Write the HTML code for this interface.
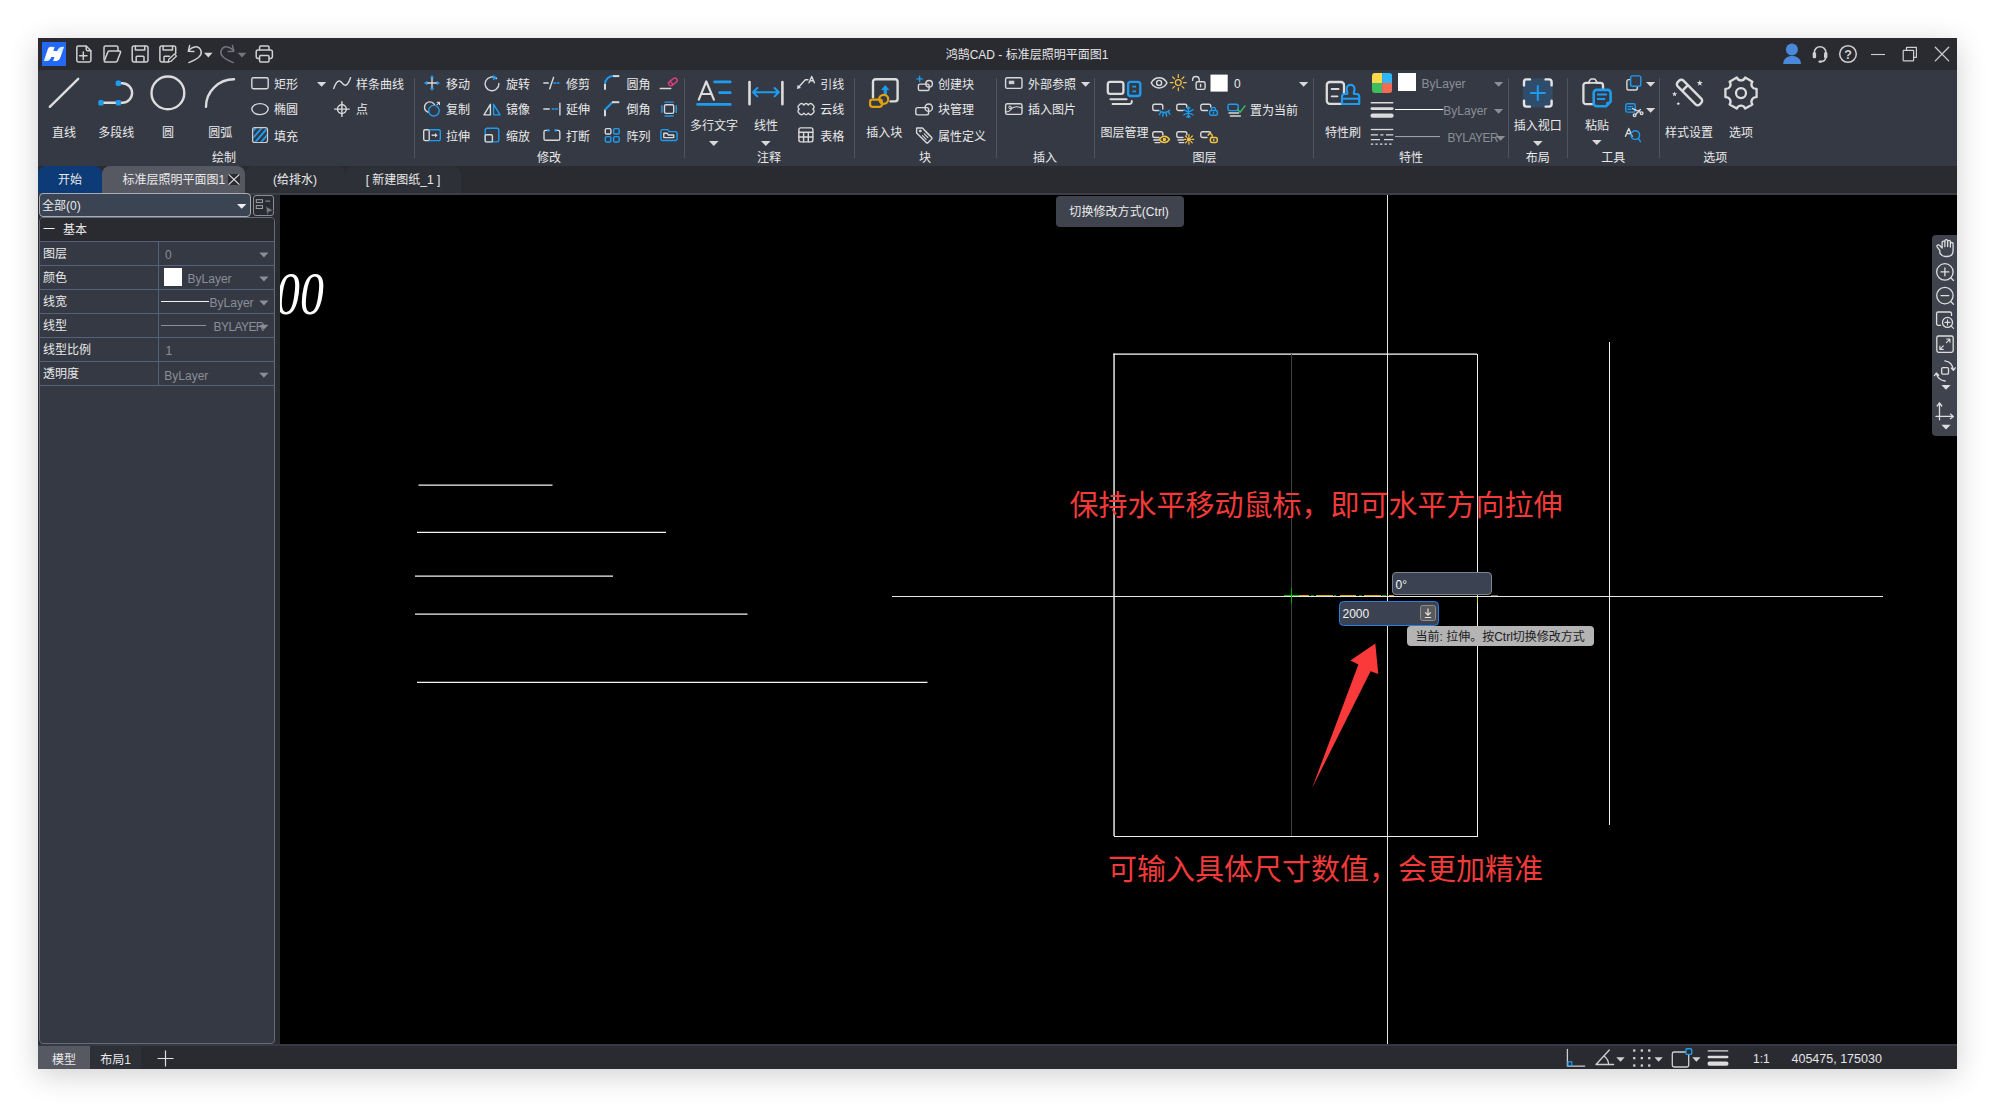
<!DOCTYPE html>
<html lang="zh-CN">
<head>
<meta charset="utf-8">
<title>鸿鹄CAD - 标准层照明平面图1</title>
<style>
html,body{margin:0;padding:0}
body{width:1995px;height:1107px;overflow:hidden;position:relative;background:#fff;
 font-family:"Liberation Sans","Noto Sans CJK SC",sans-serif;font-size:12px;color:#e6e6e6}
.a{position:absolute}
.t{position:absolute;white-space:nowrap;font-size:12px;line-height:16px;height:16px;color:#e9e9e9}
.c{text-align:center}
.g{color:#8b8e96}
svg{position:absolute;overflow:visible}
.sep{position:absolute;width:1px;top:78px;height:80px;background:#50545e}
.s{fill:none;stroke:#d9d9d9;stroke-width:1.4;stroke-linecap:round;stroke-linejoin:round}
.b{fill:none;stroke:#1e9cf0;stroke-width:1.4;stroke-linecap:round;stroke-linejoin:round}
.fw{fill:#d9d9d9}
.fb{fill:#1e9cf0}
.arr{position:absolute;width:0;height:0;border-left:4.5px solid transparent;border-right:4.5px solid transparent;border-top:5px solid #d9d9d9}
</style>
</head>
<body>
<!-- window frame -->
<div class="a" id="win" style="left:38px;top:38px;width:1919px;height:1031px;background:#2a2b31;box-shadow:0 6px 28px rgba(0,0,0,.19)"></div>
<!-- ribbon bg -->
<div class="a" id="ribbon" style="left:38px;top:70px;width:1919px;height:95.500px;background:#353944;border-radius:3px 0 0 0"></div>
<!-- canvas -->
<div class="a" id="canvas" style="left:280px;top:195px;width:1677px;height:849px;background:#000"></div>
<div class="a" style="left:38px;top:193px;width:1919px;height:2px;background:#3d3f47"></div>
<div class="a" style="left:38px;top:1044px;width:1919px;height:2px;background:#353944"></div>

<!-- ===== title bar ===== -->
<div class="a" style="left:42px;top:42px;width:24px;height:24px;background:#2468f8;overflow:hidden">
 <svg style="left:0;top:0" width="24" height="24" viewBox="0 0 24 24">
  <defs><linearGradient id="lg1" x1="0" y1="1" x2="1" y2="0"><stop offset="0" stop-color="#c4ebfc"/><stop offset=".28" stop-color="#fff"/><stop offset=".62" stop-color="#fff"/><stop offset=".85" stop-color="#c9ecfb"/><stop offset="1" stop-color="#e2f7fd"/></linearGradient></defs>
  <path d="M8.600,4.800 L12.700,5 L11.300,8.900 L15.200,8.900 C16,6.500 17.400,5 19.200,4.900 L22.100,4.800 L18.600,14.800 C17.800,17.400 16.500,18.800 14.500,18.900 L11.100,19 L12.500,14.900 L9.300,14.900 C8.500,17.300 7,18.800 5.300,18.900 L1.800,19 L5.700,7.600 C6.200,6 7,4.800 8.600,4.800 Z" fill="url(#lg1)"/>
 </svg>
</div>
<svg style="left:0;top:0" width="1995" height="72" viewBox="0 0 1995 72">
 <g fill="none" stroke="#cfcfcf" stroke-width="1.5" stroke-linecap="round" stroke-linejoin="round">
  <!-- new -->
  <path d="M78.4,46 h7.8 l4.7,4.7 v9.6 a1.6,1.6 0 0 1 -1.6,1.6 h-10.9 a1.6,1.6 0 0 1 -1.6,-1.6 v-12.7 a1.6,1.6 0 0 1 1.6,-1.6 z"/>
  <path d="M86.2,46.3 v3 a1.4,1.4 0 0 0 1.4,1.4 h3"/>
  <path d="M79.6,55.8 h7.4 M83.3,52.1 v7.4"/>
  <!-- open -->
  <path d="M104,59.5 v-11.9 a1.6,1.6 0 0 1 1.6,-1.6 h10.8 a1.6,1.6 0 0 1 1.6,1.6 v3.4"/>
  <path d="M105.6,61.9 h10.2 a1.6,1.6 0 0 0 1.5,-1 l3.2,-8.4 a1,1 0 0 0 -1,-1.4 h-10.2 a1.6,1.6 0 0 0 -1.5,1 l-3.5,9 a.6,.6 0 0 0 .6,.8 z"/>
  <!-- save -->
  <rect x="132.2" y="46" width="15.8" height="15.9" rx="1.8"/>
  <path d="M135.4,46.3 v3.6 h9.4 v-3.6"/>
  <path d="M136.2,61.6 v-4.6 a.8,.8 0 0 1 .8,-.8 h6.2 a.8,.8 0 0 1 .8,.8 v4.6"/>
  <!-- save as -->
  <path d="M168.5,61.9 h-6.8 a1.8,1.8 0 0 1 -1.8,-1.8 v-12.3 a1.8,1.8 0 0 1 1.8,-1.8 h12.2 a1.8,1.8 0 0 1 1.8,1.8 v5.6"/>
  <path d="M163.1,46.3 v3.6 h9.4 v-3.6"/>
  <path d="M164,61.6 v-4.6 a.8,.8 0 0 1 .8,-.8 h4.6"/>
  <path d="M168.2,61.9 l.6,-2.6 l5.7,-5.3 l2,2.1 l-5.7,5.3 z" stroke-width="1.3"/>
  <!-- undo -->
  <path d="M189.6,45.6 l-1.3,5.6 l5.6,.3"/>
  <path d="M188.6,51.1 c2.4,-4.6 10.400,-6.6 12.5,0 c1.6,5.400 -6,9.200 -12.200,11.500"/>
  <!-- print -->
  <path d="M259.600,49.8 v-2.6 a1.200,1.200 0 0 1 1.200,-1.200 h7 a1.200,1.200 0 0 1 1.200,1.200 v2.600"/>
  <path d="M259.4,58.400 h-1.400 a1.800,1.800 0 0 1 -1.800,-1.800 v-4.800 a1.800,1.800 0 0 1 1.800,-1.800 h12.600 a1.800,1.800 0 0 1 1.800,1.800 v4.800 a1.800,1.800 0 0 1 -1.800,1.800 h-1.400"/>
  <rect x="259.600" y="55.400" width="9.400" height="6.500" rx="1"/>
 </g>
 <g fill="none" stroke="#74767d" stroke-width="1.500" stroke-linecap="round" stroke-linejoin="round">
  <!-- redo (disabled) -->
  <path d="M232.500,45.600 l1.300,5.600 l-5.600,.300"/>
  <path d="M233.500,51.100 c-2.400,-4.600 -10.400,-6.600 -12.500,0 c-1.600,5.400 6,9.200 12.200,11.500"/>
 </g>
 <path d="M204,52.700 h8.600 l-4.300,4.700 z" fill="#d6d6d6"/>
 <path d="M237.600,52.700 h8.800 l-4.400,4.700 z" fill="#74767d"/>
 <!-- right side -->
 <circle cx="1791.900" cy="49.600" r="6" fill="#4a88d9"/>
 <path d="M1783.200,63.900 c0,-10.400 17.800,-10.400 17.800,0 z" fill="#4a88d9"/>
 <g fill="none" stroke="#cfcfcf" stroke-width="1.500" stroke-linecap="round" stroke-linejoin="round">
  <path d="M1814.300,53.500 v-1 a5.800,5.800 0 0 1 11.600,0 v1"/>
  <path d="M1825.600,57.500 c0,3 -2,3.900 -4.600,4.100"/>
  <circle cx="1848" cy="54" r="8.300"/>
  <path d="M1871,54.500 h14" stroke-width="1.100" stroke-linecap="butt"/>
  <rect x="1903.200" y="50.400" width="10.400" height="10.400" rx=".6" stroke-width="1.200"/>
  <path d="M1906.500,50 v-2.600 h9.900 v9.900 h-2.400" stroke-width="1.200"/>
  <path d="M1935.300,47.300 l13.400,13.600 M1948.700,47.300 l-13.400,13.600" stroke-width="1.300"/>
 </g>
 <rect x="1812.700" y="52.200" width="3.400" height="6" rx="1.200" fill="#cfcfcf"/>
 <rect x="1824" y="52.200" width="3.400" height="6" rx="1.200" fill="#cfcfcf"/>
 <rect x="1818.500" y="60.400" width="3.600" height="2.400" rx="1.200" fill="#cfcfcf"/>
 <text x="1848" y="58.500" text-anchor="middle" font-family="Liberation Sans, sans-serif" font-weight="bold" font-size="12.500" fill="#cfcfcf">?</text>
</svg>
<div class="t c" style="left:900px;width:254px;top:47px;color:#e4e4e4">鸿鹄CAD - 标准层照明平面图1</div>

<!-- ===== ribbon ===== -->
<div class="sep" style="left:414px"></div>
<div class="sep" style="left:684px"></div>
<div class="sep" style="left:854px"></div>
<div class="sep" style="left:996px"></div>
<div class="sep" style="left:1094px"></div>
<div class="sep" style="left:1313px"></div>
<div class="sep" style="left:1508px"></div>
<div class="sep" style="left:1567px"></div>
<div class="sep" style="left:1659px"></div>
<div class="t c " style="left:14.0px;width:100px;top:125.0px;">直线</div>
<div class="t c " style="left:66.2px;width:100px;top:125.0px;">多段线</div>
<div class="t c " style="left:118.0px;width:100px;top:125.0px;">圆</div>
<div class="t c " style="left:170.3px;width:100px;top:125.0px;">圆弧</div>
<div class="t " style="left:274px;top:76.7px;">矩形</div>
<div class="t " style="left:274px;top:102.2px;">椭圆</div>
<div class="t " style="left:274px;top:128.9px;">填充</div>
<div class="t " style="left:356px;top:76.7px;">样条曲线</div>
<div class="t " style="left:356px;top:102.2px;">点</div>
<div class="t c " style="left:174.0px;width:100px;top:149.9px;">绘制</div>
<div class="t " style="left:446px;top:76.7px;">移动</div>
<div class="t " style="left:446px;top:102.2px;">复制</div>
<div class="t " style="left:446px;top:128.9px;">拉伸</div>
<div class="t " style="left:506px;top:76.7px;">旋转</div>
<div class="t " style="left:506px;top:102.2px;">镜像</div>
<div class="t " style="left:506px;top:128.9px;">缩放</div>
<div class="t " style="left:566px;top:76.7px;">修剪</div>
<div class="t " style="left:566px;top:102.2px;">延伸</div>
<div class="t " style="left:566px;top:128.9px;">打断</div>
<div class="t " style="left:626.5px;top:76.7px;">圆角</div>
<div class="t " style="left:626.5px;top:102.2px;">倒角</div>
<div class="t " style="left:626.5px;top:128.9px;">阵列</div>
<div class="t c " style="left:499.0px;width:100px;top:149.9px;">修改</div>
<div class="t c " style="left:664.0px;width:100px;top:117.5px;">多行文字</div>
<div class="t c " style="left:716.0px;width:100px;top:117.5px;">线性</div>
<div class="t " style="left:820.3px;top:76.7px;">引线</div>
<div class="t " style="left:820.3px;top:102.2px;">云线</div>
<div class="t " style="left:820.3px;top:128.9px;">表格</div>
<div class="t c " style="left:719.0px;width:100px;top:149.9px;">注释</div>
<div class="t c " style="left:834.2px;width:100px;top:125.4px;">插入块</div>
<div class="t " style="left:938px;top:76.7px;">创建块</div>
<div class="t " style="left:938px;top:102.2px;">块管理</div>
<div class="t " style="left:938px;top:128.9px;">属性定义</div>
<div class="t c " style="left:875.0px;width:100px;top:149.9px;">块</div>
<div class="t " style="left:1028px;top:76.7px;">外部参照</div>
<div class="t " style="left:1028px;top:102.2px;">插入图片</div>
<div class="t c " style="left:995.0px;width:100px;top:149.9px;">插入</div>
<div class="t c " style="left:1074.5px;width:100px;top:124.8px;">图层管理</div>
<div class="t " style="left:1234px;top:76.1px;">0</div>
<div class="t " style="left:1250px;top:102.8px;">置为当前</div>
<div class="t c " style="left:1154.4px;width:100px;top:149.9px;">图层</div>
<div class="t c " style="left:1292.9px;width:100px;top:124.8px;">特性刷</div>
<div class="t g" style="left:1421.6px;top:76.2px;">ByLayer</div>
<div class="t g" style="left:1443.3px;top:103.2px;">ByLayer</div>
<div class="t g" style="left:1447.4px;top:129.8px;letter-spacing:-.55px">BYLAYER</div>
<div class="t c " style="left:1361.0px;width:100px;top:149.9px;">特性</div>
<div class="t c " style="left:1487.8px;width:100px;top:117.6px;">插入视口</div>
<div class="t c " style="left:1487.8px;width:100px;top:149.9px;">布局</div>
<div class="t c " style="left:1547.0px;width:100px;top:118.0px;">粘贴</div>
<div class="t c " style="left:1563.2px;width:100px;top:149.9px;">工具</div>
<div class="t c " style="left:1639.0px;width:100px;top:125.1px;">样式设置</div>
<div class="t c " style="left:1691.0px;width:100px;top:125.1px;">选项</div>
<div class="t c " style="left:1665.2px;width:100px;top:149.9px;">选项</div>
<svg style="left:316.6px;top:81.7px" width="9.2" height="4.8" viewBox="0 0 9.2 4.8"><path d="M0,0 H9.2 L4.6,4.8 Z" fill="#d9d9d9"/></svg>
<svg style="left:709.2px;top:140.7px" width="9.6" height="5" viewBox="0 0 9.6 5"><path d="M0,0 H9.6 L4.8,5 Z" fill="#d9d9d9"/></svg>
<svg style="left:761.2px;top:140.7px" width="9.6" height="5" viewBox="0 0 9.6 5"><path d="M0,0 H9.6 L4.8,5 Z" fill="#d9d9d9"/></svg>
<svg style="left:1080.7px;top:81.6px" width="9.2" height="4.8" viewBox="0 0 9.2 4.8"><path d="M0,0 H9.2 L4.6,4.8 Z" fill="#d9d9d9"/></svg>
<svg style="left:1299.4px;top:81.7px" width="9.2" height="4.8" viewBox="0 0 9.2 4.8"><path d="M0,0 H9.2 L4.6,4.8 Z" fill="#d9d9d9"/></svg>
<svg style="left:1494.4px;top:81.8px" width="9.2" height="4.8" viewBox="0 0 9.2 4.8"><path d="M0,0 H9.2 L4.6,4.8 Z" fill="#8b8e96"/></svg>
<svg style="left:1494.4px;top:109.0px" width="9.2" height="4.8" viewBox="0 0 9.2 4.8"><path d="M0,0 H9.2 L4.6,4.8 Z" fill="#8b8e96"/></svg>
<svg style="left:1495.7px;top:135.7px" width="9.2" height="4.8" viewBox="0 0 9.2 4.8"><path d="M0,0 H9.2 L4.6,4.8 Z" fill="#8b8e96"/></svg>
<svg style="left:1533.2px;top:140.6px" width="9.6" height="5" viewBox="0 0 9.6 5"><path d="M0,0 H9.6 L4.8,5 Z" fill="#d9d9d9"/></svg>
<svg style="left:1592.3px;top:140.4px" width="9.6" height="5" viewBox="0 0 9.6 5"><path d="M0,0 H9.6 L4.8,5 Z" fill="#d9d9d9"/></svg>
<svg style="left:1645.7px;top:81.7px" width="9.2" height="4.8" viewBox="0 0 9.2 4.8"><path d="M0,0 H9.2 L4.6,4.8 Z" fill="#d9d9d9"/></svg>
<svg style="left:1645.7px;top:107.6px" width="9.2" height="4.8" viewBox="0 0 9.2 4.8"><path d="M0,0 H9.2 L4.6,4.8 Z" fill="#d9d9d9"/></svg>
<svg style="left:0;top:0" width="1995" height="170" viewBox="0 0 1995 170">
<!-- === draw group big icons === -->
<g fill="none" stroke="#dcdcdc" stroke-width="2.4" stroke-linecap="round">
 <path d="M49.8,106.800 L78.200,78.800"/>
 <path d="M118.400,83.200 H122.300 A9.800,9.800 0 0 1 122.300,102.800 H101"/>
 <circle cx="167.900" cy="92.900" r="16.400"/>
 <path d="M206,106.800 A28,27.500 0 0 1 234,79.300"/>
</g>
<g fill="#1e9cf0">
 <rect x="115.700" y="80.500" width="5.400" height="5.400" rx="1.600"/>
 <rect x="115.700" y="100.100" width="5.400" height="5.400" rx="1.600"/>
 <rect x="98.300" y="100.100" width="5.400" height="5.400" rx="1.600"/>
</g>
<!-- small draw icons -->
<g class="s">
 <rect x="251.800" y="77.700" width="16.400" height="11" rx="1.600"/>
 <ellipse cx="260" cy="109.100" rx="8.200" ry="5.500"/>
 <path d="M333.700,88.600 C335.500,83.500 337.500,80.600 339.500,81 C342,81.500 343,85.500 345.500,85.300 C348,85 349.500,80.500 350.600,77.600"/>
 <circle cx="341.900" cy="109.100" r="4.400"/>
 <path d="M334.600,109.100 H349.200 M341.900,101.800 V116.400"/>
</g>
<!-- hatch -->
<clipPath id="hc"><rect x="253.300" y="128.300" width="13.500" height="13.500" rx="1"/></clipPath>
<g clip-path="url(#hc)" stroke="#1e9cf0" stroke-width="1.900">
 <path d="M249,136 L259,124 M250,141.600 L265,124 M254.200,143.400 L270,125 M259,144.600 L272,129.400 M264,145.400 L273,134.800"/>
</g>
<rect x="252.600" y="127.600" width="14.900" height="14.900" rx="2" fill="none" stroke="#cfcfcf" stroke-width="1.200"/>

<!-- === modify group === -->
<!-- move -->
<g class="s" stroke-width="1.500" stroke-linecap="butt"><path d="M426.600,83 H437.400 M432,77.600 V88.400"/></g>
<g class="fb">
 <path d="M432,75 l2.300,3.200 h-4.600 z M432,91 l2.300,-3.200 h-4.600 z M424,83 l3.200,-2.300 v4.600 z M440,83 l-3.200,-2.300 v4.600 z"/>
</g>
<!-- copy -->
<g class="s" stroke-width="1.300"><circle cx="429.800" cy="107.200" r="5.300"/><path d="M437.200,102.300 h2.300 v2.300 M439.500,102.300 l-2.400,2.400" stroke-width="1.100"/></g>
<circle class="b" cx="433.900" cy="110.700" r="5.300" style="fill:#353944"/>
<!-- stretch -->
<g class="s"><path d="M429.200,129.800 h-4 a1.500,1.500 0 0 0 -1.500,1.500 v7.800 a1.500,1.500 0 0 0 1.500,1.500 h4 z"/><path d="M431.600,135.200 h4" stroke-linecap="butt"/><path d="M435,133 l2.600,2.200 l-2.600,2.200 z" fill="#d9d9d9" stroke="none"/></g>
<path class="b" d="M429.200,129.800 h9.600 a1.500,1.500 0 0 1 1.500,1.500 v7.800 a1.500,1.500 0 0 1 -1.500,1.500 h-9.600"/>
<!-- rotate -->
<path class="s" d="M496.500,78.600 A6.900,6.900 0 1 0 498.900,83.500"/>
<path class="fb" d="M492.800,75 l4.600,2.500 l-4.300,2.900 z"/>
<!-- mirror -->
<path class="s" d="M490.400,104.300 V114.900 H484 z"/>
<path class="b" d="M493.600,104.300 V114.900 H500 z"/>
<!-- scale -->
<rect class="b" x="485.200" y="128.300" width="13.600" height="13.600" rx="2"/>
<rect x="485.200" y="134.800" width="7.200" height="7.100" rx="1.200" fill="#353944" stroke="#d9d9d9" stroke-width="1.400"/>
<!-- trim -->
<g class="s"><path d="M543.800,83 H548.300 M549.700,88.800 L553.600,77.300"/></g>
<path class="b" d="M553.800,83 H560.400" stroke-dasharray="1.800,1.600" stroke-linecap="butt"/>
<!-- extend -->
<g class="s"><path d="M543.800,109 H549.300 M559.900,103.200 V114.900"/></g>
<path class="b" d="M552.200,109 H558" stroke-dasharray="1.800,1.600" stroke-linecap="butt"/>
<!-- break -->
<path class="s" d="M548.200,130.400 H545.600 a1.600,1.600 0 0 0 -1.600,1.600 V138.700 a1.600,1.600 0 0 0 1.600,1.600 H558.200 a1.600,1.600 0 0 0 1.600,-1.600 V132 a1.600,1.600 0 0 0 -1.600,-1.600 H555.800"/>
<circle class="fb" cx="548.400" cy="130.400" r="1.300"/><circle class="fb" cx="555.600" cy="130.400" r="1.300"/>
<!-- fillet -->
<g fill="none" stroke-width="2" stroke-linecap="butt">
 <path d="M605,89.800 V84" stroke="#d9d9d9"/><path d="M605,84 A8,8 0 0 1 613,76.100" stroke="#1e9cf0"/><path d="M613,76.100 H619.300" stroke="#d9d9d9"/>
 <path d="M605,116.200 V109.500" stroke="#d9d9d9"/><path d="M605,109.700 L612.400,102.200" stroke="#1e9cf0"/><path d="M612,102.200 H619.300" stroke="#d9d9d9"/>
</g>
<!-- array -->
<rect class="s" x="605.300" y="128.600" width="5.600" height="5.400" rx="1.200"/>
<g class="b"><rect x="613.600" y="128.600" width="5.600" height="5.400" rx="1.200"/><rect x="605.300" y="136.600" width="5.600" height="5.400" rx="1.200"/><rect x="613.600" y="136.600" width="5.600" height="5.400" rx="1.200"/></g>
<!-- erase -->
<path class="s" d="M660.200,88.500 H670.800" stroke-width="1.200"/>
<g transform="translate(672.900,81.900) rotate(-38)" fill="none" stroke="#e0407c" stroke-width="1.400"><rect x="-4.800" y="-2.300" width="9.600" height="4.600" rx="2.300"/><path d="M-2.900,-2.300 a1.400,2.300 0 0 1 0,4.600"/></g>
<!-- offset -->
<rect class="s" x="664.500" y="104.700" width="9.200" height="8.700" rx="1.400" stroke-width="1.600"/>
<g class="b" stroke-width="1.600"><path d="M665,102.100 H673.200 M665,116 H673.200 M661.900,105.600 V112.400 M676.300,105.600 V112.400"/></g>
<!-- folder-ish -->
<path class="b" d="M662.500,129.600 h5.200 l1.600,2 h6.200 a1.600,1.600 0 0 1 1.600,1.600 v5.700 a1.600,1.600 0 0 1 -1.600,1.600 h-13 a1.600,1.600 0 0 1 -1.600,-1.600 v-7.700 a1.600,1.600 0 0 1 1.600,-1.600 z"/>
<path class="s" d="M663.800,137.600 v-4.400 h3.200 l1.300,1.800 h5.400 v2.600 z" stroke-width="1.200"/>

<!-- === annotate === -->
<g fill="none" stroke="#1e9cf0" stroke-width="2.800" stroke-linecap="round"><path d="M714.600,81.900 H730.200 M719.600,92.700 H730.200 M697.600,104.400 H730.200"/></g>
<path d="M698.800,99.700 L706.300,81.500 L713.900,99.700 M701.400,94 H711.300" fill="none" stroke="#dcdcdc" stroke-width="2.200" stroke-linecap="round" stroke-linejoin="round"/>
<g fill="none" stroke="#dcdcdc" stroke-width="2.600" stroke-linecap="round"><path d="M749.500,82 V104.300 M782.400,82 V104.300"/></g>
<g fill="none" stroke="#1e9cf0" stroke-width="2" stroke-linecap="round" stroke-linejoin="round"><path d="M753.400,92.200 H778.500 M757.300,88 L753.100,92.200 L757.300,96.400 M774.600,88 L778.800,92.200 L774.600,96.400"/></g>
<!-- leader -->
<g class="s" stroke-width="1.200"><path d="M798.800,87 L805.300,79.800 H807.900"/><path d="M809,82.800 L811.700,76.500 L814.400,82.800 M809.900,80.700 H813.500"/></g>
<path d="M796.900,89 l.8,-4.200 l3.300,3.100 z" fill="#d9d9d9"/>
<!-- cloud -->
<path class="s" stroke-width="1.300" d="M799.200,105 q2.300,-3 4.600,0 q2.250,-3 4.500,0 q2.300,-3 4.600,0 q2.400,2.050 0,4.100 q2.400,2.050 0,4.100 q-2.300,3 -4.600,0 q-2.250,3 -4.500,0 q-2.300,3 -4.600,0 q-2.400,-2.050 0,-4.100 q-2.400,-2.050 0,-4.100 z"/>
<!-- table -->
<g class="s" stroke-width="1.300"><rect x="798.900" y="127.900" width="14" height="14" rx="1.800"/><path d="M798.900,132.200 H812.900 M798.900,137 H812.900 M803.600,132.200 V141.900 M808.300,132.200 V141.900"/></g>

<!-- === block === -->
<path d="M873,97.300 V81.800 a2.600,2.600 0 0 1 2.600,-2.600 H895 a2.600,2.600 0 0 1 2.600,2.600 V98.800 a2.600,2.600 0 0 1 -2.600,2.600 H890.500" fill="none" stroke="#dcdcdc" stroke-width="2.400" stroke-linecap="round"/>
<path d="M885.300,85.600 L888.900,89.700 H886.500 V94.600 H884.100 V89.700 H881.700 Z" fill="#1e9cf0" stroke="#1e9cf0" stroke-width=".8" stroke-linejoin="round"/>
<g fill="none" stroke="#e0a010" stroke-width="2.200"><rect x="870.100" y="99.600" width="11.800" height="7.200" rx="2.200"/><circle cx="883.700" cy="99.300" r="4.500"/></g>
<!-- create block -->
<g class="s" stroke-width="1.200"><rect x="918.400" y="84.100" width="10.700" height="6.400" rx="1.600"/><circle cx="929.100" cy="83.800" r="3.300"/></g>
<path class="b" d="M917,78.900 H922.200 M919.600,76.300 V81.500" stroke-width="1.200"/>
<!-- block manage -->
<g class="s" stroke-width="1.200"><rect x="915.800" y="107.600" width="12.800" height="7.300" rx="1.800"/><circle cx="928.700" cy="107.700" r="3.700"/></g>
<!-- tag -->
<g class="s" stroke-width="1.200"><path d="M917.200,128 h5.200 l9.300,9.600 a1,1 0 0 1 0,1.400 l-3.800,3.700 a1,1 0 0 1 -1.400,0 l-9.600,-9.500 a1,1 0 0 1 -.3,-.7 v-3.900 a.6,.6 0 0 1 .6,-.6 z"/><path d="M922.500,135.700 l3.600,3.600 M924.300,133.900 l3.600,3.600 M926.100,132.100 l3.600,3.600" stroke-width="1.100"/><circle cx="920.200" cy="131" r="1" fill="#d9d9d9" stroke-width=".8"/></g>

<!-- === insert === -->
<g class="s" stroke-width="1.300"><rect x="1005.600" y="77.800" width="16.400" height="10.600" rx="1.600"/><rect x="1005.600" y="103.800" width="16.400" height="10.600" rx="1.600"/>
<circle cx="1010" cy="107.300" r="1.300" stroke-width="1"/><path d="M1006,112 c3,0 4,-1.600 6,-3.600 c2,-2 5,-2.400 9.600,-.4" stroke-width="1.100"/></g>
<rect x="1008.800" y="80.700" width="5.500" height="3.500" fill="#cfcfcf"/>

<!-- === layer === -->
<rect x="1107.800" y="81.800" width="15.600" height="12" rx="2.400" fill="none" stroke="#dcdcdc" stroke-width="2.300"/>
<g fill="none" stroke="#dcdcdc" stroke-width="2" stroke-linecap="round"><path d="M1110.400,99.300 H1126.600 M1112.600,104.100 H1129.400 a2.400,2.400 0 0 0 2.400,-2.400 v-.6"/></g>
<rect x="1128.100" y="81.800" width="12.200" height="14.200" rx="2.600" fill="none" stroke="#1e9cf0" stroke-width="2.300"/>
<path d="M1132.400,86.700 H1136 M1132.400,91.300 H1136" stroke="#1e9cf0" stroke-width="1.800" fill="none"/>
<!-- row1 -->
<g class="s" stroke-width="1.300"><path d="M1151.200,82.900 c3.800,-6.800 12,-6.800 15.800,0 c-3.800,6.800 -12,6.800 -15.800,0 z"/><circle cx="1159.100" cy="82.900" r="2.500"/>
<path d="M1199.200,81.300 v-1.500 a3.300,3.300 0 0 0 -6.600,0 v.6"/><rect x="1196.100" y="81.800" width="9" height="7.600" rx="1.600"/><path d="M1200.600,84.400 v2.400"/></g>
<g fill="none" stroke="#f5c542" stroke-width="1.200" stroke-linecap="round"><circle cx="1178.300" cy="82.600" r="2.900"/><path d="M1178.300,74.600 v2.800 M1178.300,87.800 v2.800 M1170.300,82.600 h2.800 M1183.500,82.600 h2.800 M1172.700,77 l1.900,1.900 M1182,86.300 l1.900,1.900 M1172.700,88.200 l1.900,-1.900 M1182,78.900 l1.900,-1.900"/></g>
<rect x="1210.500" y="74.600" width="17.200" height="17" fill="#fff"/>
<!-- row2 -->
<g class="s" stroke-width="1.500">
 <path d="M1159,110.500 h-4.400 a1.800,1.800 0 0 1 -1.800,-1.800 v-2.600 a1.800,1.800 0 0 1 1.800,-1.800 h6.400 a1.800,1.800 0 0 1 1.800,1.800 v3"/>
 <path d="M1183,110.500 h-4.400 a1.800,1.800 0 0 1 -1.800,-1.800 v-2.600 a1.800,1.800 0 0 1 1.800,-1.800 h6.400 a1.800,1.800 0 0 1 1.800,1.800 v1.400"/>
 <path d="M1207.400,110.500 h-4.800 a1.800,1.800 0 0 1 -1.800,-1.800 v-2.600 a1.800,1.800 0 0 1 1.800,-1.800 h6.400 a1.800,1.800 0 0 1 1.800,1.800 v1"/>
 <path d="M1229,113 H1238.600 M1230.400,116 H1240.400" stroke-width="1.300"/>
</g>
<g class="b" stroke-width="1.500">
 <path d="M1159.400,110.600 c2.600,2.600 7.400,2.600 10.200,-.4 M1160.800,112.300 l-1.500,2.300 M1163.300,113.200 l-.6,2.900 M1166,113.100 l.7,2.900 M1168.300,111.900 l1.600,2.300"/>
 <path d="M1188.400,107 v10.600 M1183.800,109.650 l9.200,5.300 M1193,109.650 l-9.200,5.300 M1186.800,107.600 l1.600,1.600 l1.600,-1.600 M1186.800,117 l1.600,-1.600 l1.600,1.600" stroke-width="1.300"/>
 <rect x="1209.600" y="110.500" width="7.800" height="4.700" rx="1.400"/><path d="M1211.500,110.300 v-.9 a2,2 0 0 1 4,0 v.9 M1213.500,112.300 v1.100" stroke-width="1.300"/>
 <rect x="1228" y="104.300" width="10.200" height="6.300" rx="1.800"/>
</g>
<path d="M1237.600,109.800 l2.600,2.400 l4.800,-6.400" fill="none" stroke="#35c46a" stroke-width="1.400" stroke-linecap="round" stroke-linejoin="round"/>
<!-- row3 -->
<g class="s" stroke-width="1.500">
 <path d="M1159,137.500 h-4.400 a1.800,1.800 0 0 1 -1.800,-1.800 v-2.200 a1.800,1.800 0 0 1 1.800,-1.800 h6.400 a1.800,1.800 0 0 1 1.800,1.800 v1.600 M1153.800,140 h5 M1155,142.600 h5" stroke-width="1.400"/>
 <path d="M1183,137.500 h-4.400 a1.800,1.800 0 0 1 -1.800,-1.800 v-2.200 a1.800,1.800 0 0 1 1.800,-1.800 h6.400 a1.800,1.800 0 0 1 1.800,1.800 v1.400 M1178,140 h5.400 M1179.200,142.600 h4.600" stroke-width="1.400"/>
 <path d="M1207,137.500 h-4.400 a1.800,1.800 0 0 1 -1.800,-1.800 v-2.200 a1.800,1.800 0 0 1 1.800,-1.800 h6.400 a1.800,1.800 0 0 1 1.600,1"/>
</g>
<g fill="none" stroke="#f5c542" stroke-width="1.500" stroke-linecap="round" stroke-linejoin="round">
 <path d="M1159.400,139.400 c2.600,-4.200 7.400,-4.200 10,0 c-2.600,4.200 -7.400,4.200 -10,0 z"/><circle cx="1164.400" cy="139.400" r="1" fill="#f5c542"/>
 <circle cx="1188.900" cy="139.400" r="1.300" fill="#f5c542"/><path d="M1188.900,134.600 v1.800 M1188.900,142.400 v1.800 M1184.100,139.400 h1.800 M1191.900,139.400 h1.800 M1185.500,136 l1.300,1.300 M1191,141.500 l1.300,1.300 M1185.500,142.800 l1.300,-1.300 M1191,137.300 l1.300,-1.300" stroke-width="1.200"/>
 <rect x="1210.400" y="137.400" width="6.800" height="5.100" rx="1.400"/><path d="M1212.200,137 v-1.400 a2.100,2.100 0 0 0 -4.100,-.4 M1213.800,139.400 v1.200" stroke-width="1.400"/>
</g>

<!-- === properties === -->
<rect x="1326.800" y="82" width="17.200" height="21.800" rx="3" fill="none" stroke="#dcdcdc" stroke-width="2.300"/>
<path d="M1331.600,89 H1338.600 M1331.600,96.300 H1337.500" stroke="#dcdcdc" stroke-width="1.800" stroke-linecap="round" fill="none"/>
<path d="M1342,104 v-7.400 a2.600,2.600 0 0 1 2.600,-2.600 h2.600 c.6,-1.800 -.5,-3 -.5,-5.200 a3.900,3.900 0 0 1 7.800,0 c0,2.200 -1.100,3.400 -.5,5.200 h2.600 a2.600,2.600 0 0 1 2.600,2.600 v7.400 z" fill="#353944" stroke="#1e9cf0" stroke-width="2.200" stroke-linejoin="round"/>
<path d="M1342.400,98.700 H1358.800" stroke="#1e9cf0" stroke-width="2" fill="none"/>
<clipPath id="cc"><rect x="1372" y="73" width="20.200" height="20" rx="3"/></clipPath>
<g clip-path="url(#cc)"><rect x="1372" y="73" width="10.100" height="10" fill="#ffd94a"/><rect x="1382.100" y="73" width="10.100" height="10" fill="#2eb6f5"/><rect x="1372" y="83" width="10.100" height="10" fill="#3dbd5d"/><rect x="1382.100" y="83" width="10.100" height="10" fill="#f26b55"/></g>
<rect x="1398" y="73" width="18" height="18" fill="#fff"/>
<g stroke="#dcdcdc" fill="none" stroke-linecap="round"><path d="M1371.300,102.800 H1392.800" stroke-width="1.400"/><path d="M1371.800,108.600 H1392.300" stroke-width="2.600"/><path d="M1372.600,115.700 H1391.500" stroke-width="4.300"/></g>
<path d="M1395,109.500 H1443.300" stroke="#fff" stroke-width="1" fill="none"/>
<g stroke="#dcdcdc" fill="none" stroke-width="1.300"><path d="M1370.800,129.500 H1393.300"/><path d="M1370.800,134.900 H1378 M1380.400,134.900 H1383.400 M1386,134.900 H1393.300"/><path d="M1370.800,139.700 H1380 M1384,139.700 H1393.300"/><path d="M1370.800,144.200 H1393.300" stroke-dasharray="2.400,2.200"/></g>
<path d="M1395,136.600 H1440" stroke="#a8abb2" stroke-width="1" fill="none"/>

<!-- === layout === -->
<rect x="1523" y="78.400" width="29.600" height="29.200" rx="4" fill="#2f4d6b"/>
<g fill="none" stroke="#e4e4e4" stroke-width="2.400" stroke-linecap="round"><path d="M1524,85.400 v-3.400 a2.600,2.600 0 0 1 2.600,-2.600 h3.400 M1545.600,79.400 h3.400 a2.600,2.600 0 0 1 2.600,2.600 v3.400 M1551.600,100.600 v3.400 a2.600,2.600 0 0 1 -2.600,2.600 h-3.400 M1530,106.600 h-3.400 a2.600,2.600 0 0 1 -2.600,-2.600 v-3.400"/></g>
<path d="M1530.800,93 H1544.800 M1537.800,86 V100" stroke="#1e9cf0" stroke-width="2" fill="none" stroke-linecap="round"/>

<!-- === tools === -->
<path d="M1589,82.800 h-3 a2.600,2.600 0 0 0 -2.600,2.600 v16.200 a2.600,2.600 0 0 0 2.600,2.600 h7 M1596.600,82.800 h3.800 a2.600,2.600 0 0 1 2.600,2.600 v3" fill="none" stroke="#dcdcdc" stroke-width="2.300" stroke-linecap="round"/>
<path d="M1588.600,82.800 l1.300,-2.800 a1.600,1.600 0 0 1 1.400,-1 h3 a1.600,1.600 0 0 1 1.400,1 l1.300,2.800 z" fill="none" stroke="#dcdcdc" stroke-width="1.700" stroke-linejoin="round"/>
<path d="M1596.700,89.900 h10.900 a3,3 0 0 1 3,3 v8.800 l-4.600,4.600 h-9.300 a3,3 0 0 1 -3,-3 v-10.400 a3,3 0 0 1 3,-3 z" fill="#353944" stroke="#1e9cf0" stroke-width="2.600" stroke-linejoin="round"/>
<path d="M1597.800,94.400 H1606.200 M1597.800,98.900 H1604.400" stroke="#1e9cf0" stroke-width="2" fill="none" stroke-linecap="round"/>
<path d="M1610.600,101.700 h-3 a1.600,1.600 0 0 0 -1.600,1.600 v3 z" fill="#1e9cf0"/>
<rect class="s" x="1626.900" y="79.600" width="10.400" height="10.400" rx="1.800" stroke-width="1.300"/>
<rect x="1630.600" y="75.900" width="10.200" height="10.300" rx="1.800" fill="#353944" stroke="#1e9cf0" stroke-width="1.400"/>
<rect class="b" x="1625.800" y="103.800" width="9.400" height="8.300" rx="1.600"/>
<path class="b" d="M1628,106.600 h4.600 M1628,109.300 h3" stroke-width="1.100"/>
<g class="s" stroke-width="1"><path d="M1632.600,108.600 l7.600,3.600 M1635.800,114.200 l4.600,-4.600"/><circle cx="1634.600" cy="115.200" r="1.300"/><circle cx="1641.600" cy="113.200" r="1.300"/></g>
<path class="s" stroke-width="1.200" d="M1625.500,136.300 L1628.800,128.500 L1632.100,136.300 M1626.600,133.600 H1631"/>
<g class="b" stroke-width="1.300"><circle cx="1635.300" cy="135.100" r="4.300"/><path d="M1638.400,138.400 l2,3.300"/></g>

<!-- === options === -->
<g transform="translate(1689.500,92.500) rotate(45.200)" fill="none" stroke="#dcdcdc" stroke-width="2.400" stroke-linejoin="round"><rect x="-15.650" y="-4" width="31.300" height="8" rx="3"/><path d="M-6.300,-4 V4"/></g>
<g fill="#dcdcdc">
 <path id="st" d="M0,-2.700 L.7,-.9 L2.600,-.8 L1.100,.4 L1.600,2.200 L0,1.200 L-1.600,2.200 L-1.100,.4 L-2.600,-.8 L-.7,-.9 Z" transform="translate(1699.800,83.100) scale(1.150)"/>
 <path d="M0,-2.700 L.7,-.9 L2.600,-.8 L1.100,.4 L1.600,2.200 L0,1.200 L-1.600,2.200 L-1.100,.4 L-2.600,-.8 L-.7,-.9 Z" transform="translate(1674.600,94.100) scale(1)"/>
 <path d="M0,-2.700 L.7,-.9 L2.600,-.8 L1.100,.4 L1.600,2.200 L0,1.200 L-1.600,2.200 L-1.100,.4 L-2.600,-.8 L-.7,-.9 Z" transform="translate(1678.300,103.700) scale(.72)"/>
</g>
<circle cx="1741" cy="93.050" r="5" fill="none" stroke="#dcdcdc" stroke-width="2.300"/>
<path id="gear" d="M1756.6,88.9 L1756.6,97.2 A4.5,4.5 0 0 0 1752.4,104.4 L1745.2,108.6 A4.5,4.5 0 0 0 1736.8,108.6 L1729.6,104.4 A4.5,4.5 0 0 0 1725.4,97.2 L1725.4,88.9 A4.5,4.5 0 0 0 1729.6,81.7 L1736.8,77.5 A4.5,4.5 0 0 0 1745.2,77.5 L1752.4,81.7 A4.5,4.5 0 0 0 1756.6,88.9 Z" fill="none" stroke="#dcdcdc" stroke-width="2.300" stroke-linejoin="round"/>
</svg>


<!-- ===== document tabs ===== -->
<div class="a" style="left:38px;top:166px;width:64px;height:27px;background:#0d3b78;border-radius:8px 8px 0 0"></div>
<div class="a" style="left:102px;top:166px;width:143px;height:27px;background:#565962;border-radius:8px 8px 0 0"></div>
<div class="a" style="left:245px;top:166px;width:100px;height:27px;background:#2e3038;border-radius:8px 8px 0 0"></div>
<div class="a" style="left:345px;top:166px;width:116px;height:27px;background:#2e3038;border-radius:8px 8px 0 0"></div>
<div class="t c" style="left:38px;width:64px;top:171.900px">开始</div>
<div class="t" style="left:122.500px;top:171.900px">标准层照明平面图1</div>
<div class="a" style="left:228px;top:174px;width:12px;height:11px;background:#2a2b31"></div>
<svg style="left:228px;top:174px" width="12" height="11" viewBox="0 0 12 11"><path d="M.6,.4 L11.400,10.600 M11.400,.4 L.6,10.600" stroke="#e6e6e6" stroke-width="1.100" fill="none"/></svg>
<div class="t c" style="left:245px;width:100px;top:171.900px">(给排水)</div>
<div class="t c" style="left:345px;width:116px;top:171.900px">[ 新建图纸_1 ]</div>

<!-- ===== properties panel ===== -->
<div class="a" style="left:39px;top:193px;width:212px;height:24px;box-sizing:border-box;background:#3b4453;border:1px solid #a9abb0;border-radius:4px"></div>
<div class="t" style="left:42px;top:197.800px">全部(0)</div>
<svg style="left:237.400px;top:203.800px" width="9.400" height="4.800" viewBox="0 0 9.400 4.800"><path d="M0,0 H9.400 L4.700,4.800 Z" fill="#ededed"/></svg>
<div class="a" style="left:252.500px;top:195px;width:21px;height:20.500px;box-sizing:border-box;border:1px solid #8b8e95;border-radius:3px"></div>
<svg style="left:252px;top:194px" width="24" height="24" viewBox="252 194 24 24">
 <g fill="none" stroke="#9b9ea5" stroke-width="1"><rect x="256.300" y="199.700" width="6.200" height="2.900"/><rect x="256.300" y="205.600" width="6.200" height="2.900"/><path d="M265.400,201.100 H270.200"/></g>
 <path d="M265.800,206.400 L273.600,210.600 L269.200,211.600 L267.400,215 Z" fill="#7b7e86" stroke="#353944" stroke-width=".8"/>
</svg>
<div class="a" style="left:38.500px;top:217px;width:236px;height:826.500px;box-sizing:border-box;background:#353944;border:1px solid #666b78;border-radius:4px"></div>
<div class="a" style="left:39.500px;top:218px;width:234px;height:23px;background:#2a2b31;border-radius:3px 3px 0 0"></div>
<div class="t" style="left:43px;top:221.600px">一</div>
<div class="t" style="left:63px;top:221.600px">基本</div>
<!-- grid -->
<div class="a" style="left:39.500px;top:241px;width:234px;height:145px;
 background:
 linear-gradient(#56607a,#56607a) 0 0/100% 1px no-repeat,
 linear-gradient(#56607a,#56607a) 0 24px/100% 1px no-repeat,
 linear-gradient(#56607a,#56607a) 0 48px/100% 1px no-repeat,
 linear-gradient(#56607a,#56607a) 0 72px/100% 1px no-repeat,
 linear-gradient(#56607a,#56607a) 0 96px/100% 1px no-repeat,
 linear-gradient(#56607a,#56607a) 0 120px/100% 1px no-repeat,
 linear-gradient(#56607a,#56607a) 0 144px/100% 1px no-repeat,
 linear-gradient(#56607a,#56607a) 118.500px 0/1px 100% no-repeat"></div>
<div class="t" style="left:43px;top:245.600px">图层</div>
<div class="t" style="left:43px;top:269.600px">颜色</div>
<div class="t" style="left:43px;top:293.600px">线宽</div>
<div class="t" style="left:43px;top:317.600px">线型</div>
<div class="t" style="left:43px;top:341.600px">线型比例</div>
<div class="t" style="left:43px;top:365.600px">透明度</div>
<div class="t g" style="left:165px;top:246.800px">0</div>
<div class="a" style="left:164px;top:268.300px;width:18px;height:17.600px;background:#fff"></div>
<div class="t g" style="left:187.600px;top:271px">ByLayer</div>
<div class="a" style="left:161px;top:301px;width:48px;height:1px;background:#f2f2f2"></div>
<div class="t g" style="left:209.600px;top:295px">ByLayer</div>
<div class="a" style="left:161px;top:325px;width:45px;height:1px;background:#8b8e96"></div>
<div class="t g" style="left:213.600px;top:319.200px;letter-spacing:-.6px">BYLAYER</div>
<div class="t g" style="left:165.600px;top:342.800px">1</div>
<div class="t g" style="left:164.300px;top:368.200px">ByLayer</div>
<svg style="left:0;top:0" width="280" height="400" viewBox="0 0 280 400"><g fill="#8b8e96">
 <path d="M259.300,252.600 h9.200 l-4.600,4.900 z"/><path d="M259.300,276.500 h9.200 l-4.600,4.900 z"/><path d="M259.300,300.500 h9.200 l-4.600,4.900 z"/><path d="M259.300,324.700 h9.200 l-4.600,4.900 z"/><path d="M259.300,372.800 h9.200 l-4.600,4.900 z"/></g></svg>

<!-- ===== drawing canvas content ===== -->
<div class="a" style="left:280px;top:195px;width:1677px;height:849px;overflow:hidden">
 <div class="a" style="left:-4px;top:58.800px;font-family:'Liberation Serif',serif;font-style:italic;font-size:60.500px;line-height:80px;color:#fff;white-space:nowrap;transform-origin:0 0;transform:scaleX(.79)">00</div>
</div>
<svg style="left:0;top:0" width="1995" height="1107" viewBox="0 0 1995 1107">
 <g stroke="#f4f4f4" stroke-width="1.250" fill="none">
  <path d="M418.500,485 H552.500"/>
  <path d="M417,532.400 H666"/>
  <path d="M415,576 H613"/>
  <path d="M415,614.200 H747.500"/>
  <path d="M417,682.400 H927.500"/>
 </g>
 <!-- rectangle being stretched -->
 <g stroke="#fff" stroke-width="1.350" fill="none">
  <path d="M1113.400,354.100 H1477"/>
  <path d="M1114.050,353.400 V836"/>
 </g>
 <g stroke="#f0f0f0" stroke-width="1" fill="none" shape-rendering="crispEdges">
  <path d="M1477.500,354 V837"/>
  <path d="M1114,836.500 H1478"/>
  <path d="M1609.500,342 V825"/>
 </g>
 <path d="M1291.500,354 V836" stroke="#3e3e3e" stroke-width="1" fill="none" shape-rendering="crispEdges"/>
 <!-- crosshair -->
 <g stroke="#e6e6e6" stroke-width="1" fill="none" shape-rendering="crispEdges">
  <path d="M1387.500,195 V1044"/>
  <path d="M892,596.500 H1883"/>
 </g>
 <!-- tracking marks -->
 <g fill="none" stroke-width="1" shape-rendering="crispEdges">
  <path d="M1291.500,588 V603" stroke="#00b400"/>
  <path d="M1284,595.500 H1298.500" stroke="#00b400"/>
  <path d="M1298.500,595.500 H1309 M1315.500,595.500 H1333 M1339.500,595.500 H1356 M1363.500,595.500 H1381 M1389,595.500 H1394" stroke="#d9a400"/>
  <path d="M1311,595.500 H1313.500 M1333.500,595.500 H1336 M1359,595.500 H1362 M1382,595.500 H1386" stroke="#00a000"/>
  <path d="M1477.500,598 V603" stroke="#e6d800"/>
  <path d="M1491,595.500 H1497.500" stroke="#6a6a6a"/>
 </g>
</svg>
<!-- red annotations -->
<div class="a" style="left:1069.500px;top:485px;font-size:29px;line-height:42px;color:#f23a3a;white-space:nowrap">保持水平移动鼠标，即可水平方向拉伸</div>
<div class="a" style="left:1108px;top:849px;font-size:29px;line-height:42px;color:#f23a3a;white-space:nowrap">可输入具体尺寸数值，会更加精准</div>
<svg style="left:0;top:0" width="1995" height="1107" viewBox="0 0 1995 1107">
 <path d="M1375.300,643.500 L1350.400,660.600 L1358.400,664.400 L1312.200,787.800 L1370.600,671.200 L1378.300,674.100 Z" fill="#fa3a3a"/>
</svg>
<!-- top tooltip -->
<div class="a" style="left:1055.500px;top:195.500px;width:128.500px;height:31px;background:#3f434e;border-radius:4px"></div>
<div class="t" style="left:1069.300px;top:204.400px;color:#ececec;letter-spacing:.08px">切换修改方式(Ctrl)</div>
<!-- angle box -->
<div class="a" style="left:1392px;top:572px;width:100px;height:23px;box-sizing:border-box;background:#3b4352;border:1px solid #80848e;border-radius:4px"></div>
<div class="t" style="left:1395.500px;top:577px;color:#f2f2f2">0°</div>
<!-- length input -->
<div class="a" style="left:1338.500px;top:600.500px;width:100.500px;height:25px;box-sizing:border-box;background:#3b4352;border:1.500px solid #2a7de1;border-radius:4.500px"></div>
<div class="t" style="left:1342.500px;top:606.400px;color:#f2f2f2">2000</div>
<div class="a" style="left:1420px;top:605px;width:16px;height:16px;box-sizing:border-box;background:#5a5a5c;border:1px solid #8d8d8f;border-radius:2.500px"></div>
<svg style="left:1420px;top:605px" width="16" height="16" viewBox="0 0 16 16"><path d="M8,3.500 V9.800 M5.200,7.400 L8,10.200 L10.800,7.400 M4.800,12.500 H11.200" fill="none" stroke="#e4e4e4" stroke-width="1.200"/></svg>
<!-- bottom tooltip -->
<div class="a" style="left:1407px;top:625.500px;width:186.500px;height:20.500px;background:#b4b4b4;border-radius:4px"></div>
<div class="t" style="left:1415.500px;top:629.200px;color:#1c1c1c">当前: 拉伸。按Ctrl切换修改方式</div>

<!-- ===== nav bar ===== -->
<div class="a" style="left:1932px;top:235px;width:25px;height:201px;background:#3f434e;border-radius:4px 0 0 4px"></div>
<svg style="left:0;top:0" width="1995" height="450" viewBox="0 0 1995 450">
 <g fill="none" stroke="#dedede" stroke-width="1.300" stroke-linecap="round" stroke-linejoin="round">
  <!-- hand -->
  <g transform="translate(1945.050,0) scale(1.140,1) translate(-1944.150,0)"><path vector-effect="non-scaling-stroke" d="M1939.600,250.600 L1937.200,246.800 a1.300,1.300 0 0 1 2.100,-1.500 L1941.600,248 V242.300 a1.200,1.200 0 0 1 2.400,0 V246.500 V240.900 a1.200,1.200 0 0 1 2.400,0 V246.500 V241.500 a1.200,1.200 0 0 1 2.400,0 V247 V243.700 a1.200,1.200 0 0 1 2.400,0 V250.500 c0,3.600 -2,6 -5.500,6 h-1.500 c-2.400,0 -3.600,-1.600 -4.600,-3.400 Z"/></g>
  <!-- zoom in -->
  <circle cx="1944.900" cy="271.900" r="8.200"/><path d="M1941,271.900 H1948.800 M1944.900,268 V275.800 M1951,278 L1953.500,280.500"/>
  <!-- zoom out -->
  <circle cx="1944.900" cy="295.600" r="8.200"/><path d="M1941,295.600 H1948.800 M1951,301.700 L1953.500,304.200"/>
  <!-- zoom window -->
  <path d="M1940.600,325.300 H1938.200 a1.600,1.600 0 0 1 -1.600,-1.600 V313.600 a1.600,1.600 0 0 1 1.600,-1.600 H1949.900 a1.600,1.600 0 0 1 1.600,1.600 V315.400"/>
  <circle cx="1947.500" cy="322.400" r="5"/><path d="M1945,322.400 H1950 M1947.500,319.900 V324.900 M1951.300,326.200 L1953.500,328.400" stroke-width="1.100"/>
  <!-- extents -->
  <rect x="1936.800" y="336" width="16.400" height="16.400" rx="1.800"/>
  <path d="M1946.400,342.600 L1949.800,339.200 M1946.600,339 H1949.900 V342.300 M1943.400,345.800 L1940,349.200 M1939.900,346.100 V349.400 H1943.200" stroke-width="1.100"/>
  <!-- orbit -->
  <rect x="1941.700" y="367.600" width="6.800" height="6.600" rx="1.200"/>
  <path d="M1944.800,360.900 C1949.800,361.400 1952.600,365 1953.300,370 M1951.300,368 L1953.400,370.400 L1955.200,367.800"/>
  <path d="M1945.200,381 C1940.200,380.500 1937.200,377 1936.400,373.400 M1934.500,375.600 L1936.300,373 L1938.600,375.200"/>
  <!-- ucs -->
  <path d="M1939.500,403.200 V419.800 M1936,416.400 H1952.800 M1937.200,406 L1939.500,402.800 L1941.800,406 M1950.400,414.100 L1953.400,416.400 L1950.400,418.700"/>
 </g>
 <g fill="#dedede"><path d="M1941.400,385 h9.200 l-4.600,4.700 z"/><path d="M1941.400,424.700 h9.200 l-4.600,4.700 z"/></g>
</svg>

<!-- ===== status bar ===== -->
<div class="a" style="left:38px;top:1046px;width:52px;height:23px;background:#565962"></div>
<div class="a" style="left:90px;top:1046px;width:51px;height:23px;background:#2e3038"></div>
<div class="t c" style="left:38px;width:52px;top:1052.300px">模型</div>
<div class="t c" style="left:90px;width:51px;top:1052.300px">布局1</div>
<svg style="left:0;top:1040px" width="1995" height="67" viewBox="0 1040 1995 67">
 <path d="M157.500,1058.500 H173.500 M165.500,1050.500 V1066.500" stroke="#e0e0e0" stroke-width="1.200" fill="none"/>
 <g fill="none" stroke="#d0d0d0" stroke-width="1.300" stroke-linecap="round" stroke-linejoin="round">
  <path d="M1567.400,1049.400 V1066.200 H1584.600"/>
  <path d="M1609.300,1050 L1596,1064.500 H1613.600"/><path d="M1604.300,1056.300 C1607,1058.400 1608.400,1061 1608.600,1064.300"/>
  <rect x="1672.300" y="1052" width="16.400" height="15" rx="1.800"/>
 </g>
 <rect x="1568" y="1061.800" width="3.800" height="3.800" fill="none" stroke="#1e9cf0" stroke-width="1.200"/>
 <g fill="#d0d0d0">
  <rect x="1633.100" y="1049.400" width="2.300" height="2.300"/><rect x="1640.700" y="1049.400" width="2.300" height="2.300"/><rect x="1648.100" y="1049.400" width="2.300" height="2.300"/>
  <rect x="1633.100" y="1057" width="2.300" height="2.300"/><rect x="1640.700" y="1057" width="2.300" height="2.300"/><rect x="1648.100" y="1057" width="2.300" height="2.300"/>
  <rect x="1633.100" y="1064.400" width="2.300" height="2.300"/><rect x="1640.700" y="1064.400" width="2.300" height="2.300"/><rect x="1648.100" y="1064.400" width="2.300" height="2.300"/>
  <path d="M1616.300,1057.300 h8.400 l-4.200,4.400 z M1654.400,1057.300 h8.400 l-4.200,4.400 z M1692.200,1057.300 h8.400 l-4.200,4.400 z"/>
 </g>
 <rect x="1685.900" y="1048.800" width="5.800" height="5.600" rx="1.200" fill="#2a2b31" stroke="#1e9cf0" stroke-width="1.400"/>
 <g stroke="#dcdcdc" fill="none" stroke-linecap="round"><path d="M1708.300,1050.900 H1727.700" stroke-width="1.400"/><path d="M1708.800,1057 H1727.200" stroke-width="2.500"/><path d="M1709.600,1063.700 H1726.400" stroke-width="4.200"/></g>
</svg>
<div class="t" style="left:1753px;top:1051px;color:#e4e4e4">1:1</div>
<div class="t" style="left:1791.500px;top:1051px;color:#e4e4e4;font-size:12.500px">405475, 175030</div>

</body>
</html>
